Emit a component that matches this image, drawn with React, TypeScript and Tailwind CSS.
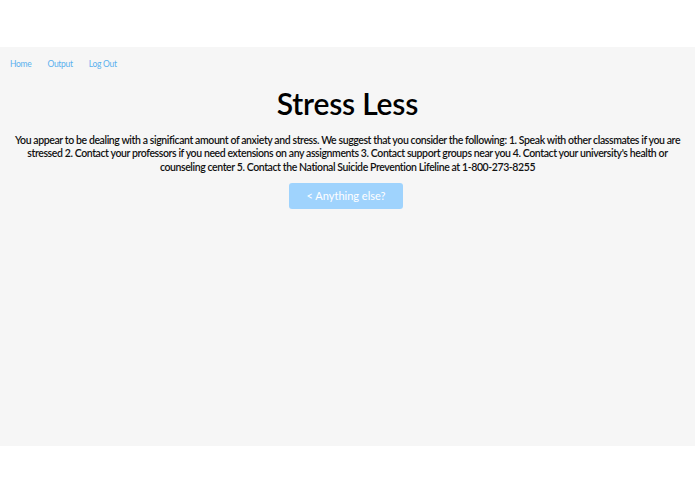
export default function App() {
  return (
    <div className="min-h-[494px] bg-white" style={{ fontFamily: 'Lato, "Noto Sans", sans-serif' }}>
      <div className="h-[47px]" />
      <div className="h-[399px] bg-[#f6f6f6] flex flex-col">
        {/* Top nav */}
        <nav className="flex gap-4 px-[10px] pt-[11px] text-[8.5px] tracking-[-0.3px] text-[#5ab1ee]">
          <a href="#">Home</a>
          <a href="#">Output</a>
          <a href="#">Log Out</a>
        </nav>

        <h1 className="mt-[14px] text-center text-[30px] font-semibold leading-[36px] tracking-[-0.2px] text-black">
          Stress Less
        </h1>

        <p className="mt-[13px] px-[10px] text-center text-[10.5px] font-semibold leading-[13.5px] tracking-[-0.4px] text-[#111]">
          You appear to be dealing with a significant amount of anxiety and stress. We suggest that you consider the
          following: 1. Speak with other classmates if you are stressed 2. Contact your professors if you need
          extensions on any assignments 3. Contact support groups near you 4. Contact your university's health or
          counseling center 5. Contact the National Suicide Prevention Lifeline at 1-800-273-8255
        </p>

        <div className="mt-[9px] flex justify-center">
          <button className="mr-[3px] h-[26px] w-[114px] rounded-[3px] bg-[#9fd3fd] text-[11px] text-white">
            &lt; Anything else?
          </button>
        </div>
      </div>
    </div>
  )
}
